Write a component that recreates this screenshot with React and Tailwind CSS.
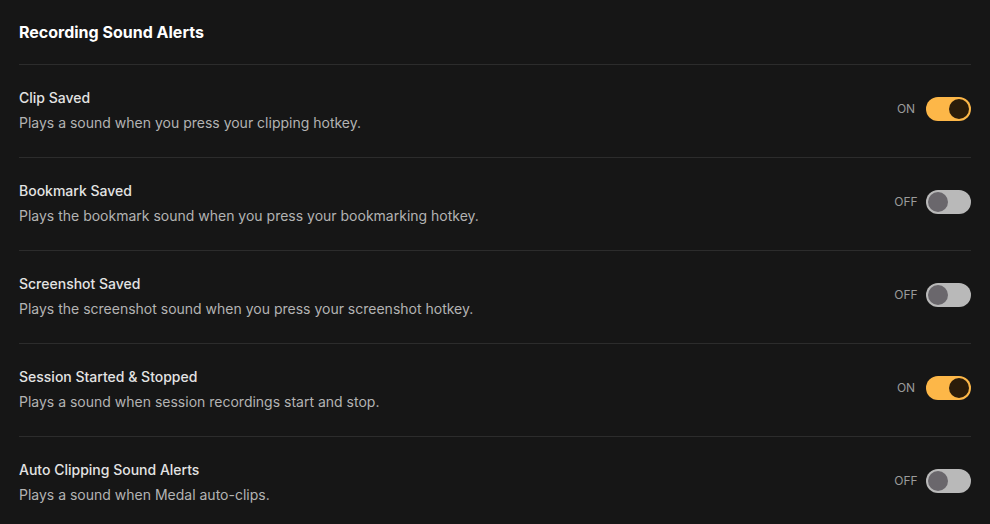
import React from "react";

const rows = [
  { title: "Clip Saved", desc: "Plays a sound when you press your clipping hotkey.", on: true },
  { title: "Bookmark Saved", desc: "Plays the bookmark sound when you press your bookmarking hotkey.", on: false },
  { title: "Screenshot Saved", desc: "Plays the screenshot sound when you press your screenshot hotkey.", on: false },
  { title: "Session Started & Stopped", desc: "Plays a sound when session recordings start and stop.", on: true },
  { title: "Auto Clipping Sound Alerts", desc: "Plays a sound when Medal auto-clips.", on: false },
];

function Toggle({ on }) {
  return (
    <div className="flex items-center gap-[8px] mt-[9px]">
      <span className="w-[24px] text-center text-[12px] leading-none text-[#9b9b9b]">{on ? "ON" : "OFF"}</span>
      <div
        className={
          "w-[45px] h-[24px] rounded-full p-[2px] flex items-center " +
          (on ? "bg-[#fdb748] justify-end" : "bg-[#b9b9b9] justify-start")
        }
      >
        <div className={"w-[20px] h-[20px] rounded-full " + (on ? "bg-[#2b1c0a]" : "bg-[#6a676c]")} />
      </div>
    </div>
  );
}

export default function App() {
  return (
    <div className="w-[990px] h-[524px] bg-[#161616] overflow-hidden" style={{ fontFamily: "Inter, 'Noto Sans', sans-serif" }}>
      <div className="pl-[19px] pr-[19px]">
        <div className="pt-[20px] pb-[20px]">
          <h1 className="text-[16px] leading-[24px] font-bold text-white">Recording Sound Alerts</h1>
        </div>
        {rows.map((r) => (
          <div key={r.title} className="border-t border-[#2c2c2c] flex items-start justify-between pt-[23px] pb-[24px]">
            <div className="flex flex-col">
              <div className="text-[14px] leading-[20px] font-medium text-[#e3e3e3]">{r.title}</div>
              <div className="mt-[5px] text-[14px] leading-[20px] text-[#b3b3b3]">{r.desc}</div>
            </div>
            <Toggle on={r.on} />
          </div>
        ))}
      </div>
    </div>
  );
}
